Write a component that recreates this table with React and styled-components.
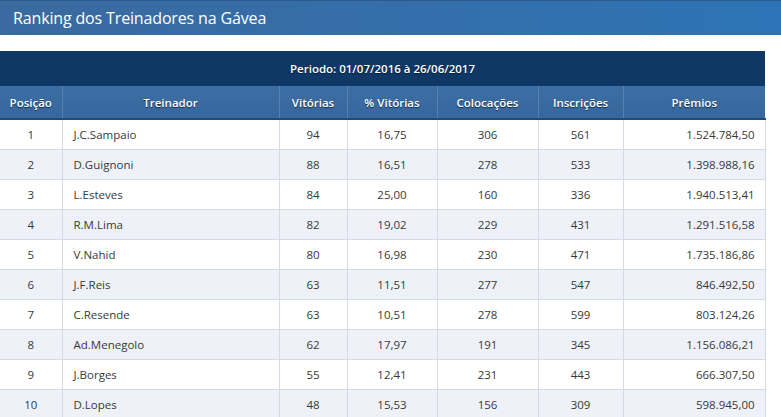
import React from "react";
import styled, { createGlobalStyle } from "styled-components";

const Global = createGlobalStyle`
  html, body { margin: 0; padding: 0; background: #fff; }
  body { font-family: "Open Sans", "Noto Sans", sans-serif; }
`;

const Page = styled.div`
  width: 781px;
  height: 417px;
  overflow: hidden;
  background: #fff;
`;

const TitleBar = styled.div`
  height: 34px;
  border-top: 1px solid #2d5b8e;
  background: linear-gradient(to right, #3a6a9f 0%, #336fac 60%, #2d74b6 100%);
  display: flex;
  align-items: center;
  padding-left: 13px;
  color: #fff;
  font-size: 16px;
  letter-spacing: -0.15px;
`;

const Gap = styled.div`
  height: 16px;
`;

const Table = styled.table`
  width: 765px;
  border-collapse: collapse;
  table-layout: fixed;
  font-size: 11.5px;
`;

const PeriodCell = styled.th`
  height: 35px;
  padding: 0;
  background: #0f3867;
  color: #fff;
  font-weight: 600;
  font-size: 11.5px;
  text-shadow: 0 1px 1px rgba(0,0,0,0.5);
`;

const HeadCell = styled.th`
  height: 32px;
  padding: 0;
  background: linear-gradient(to bottom, #3c6ea4, #37679c);
  color: #fff;
  font-weight: 600;
  font-size: 11.5px;
  text-shadow: 0 1px 1px rgba(0,0,0,0.6);
  border-left: 1px solid #5582b3;
  border-bottom: 2px solid #21497a;
  &:first-child { border-left: none; }
`;

const Row = styled.tr`
  background: ${(p) => (p.$alt ? "#eef2f8" : "#ffffff")};
`;

const Cell = styled.td`
  height: 29px;
  padding: ${(p) =>
    p.$align === "left" ? "0 0 0 11px" : p.$align === "right" ? "0 10px 0 0" : "0"};
  text-align: ${(p) => p.$align || "center"};
  color: #383838;
  border: 1px solid #d6dbe3;
  &:first-child { border-left: none; }
  white-space: nowrap;
`;

const cols = [
  { label: "Posição", w: 62 },
  { label: "Treinador", w: 217 },
  { label: "Vitórias", w: 68 },
  { label: "% Vitórias", w: 90 },
  { label: "Colocações", w: 101 },
  { label: "Inscrições", w: 85 },
  { label: "Prêmios", w: 142 },
];

const aligns = ["center", "left", "center", "center", "center", "center", "right"];

const data = [
  ["1", "J.C.Sampaio", "94", "16,75", "306", "561", "1.524.784,50"],
  ["2", "D.Guignoni", "88", "16,51", "278", "533", "1.398.988,16"],
  ["3", "L.Esteves", "84", "25,00", "160", "336", "1.940.513,41"],
  ["4", "R.M.Lima", "82", "19,02", "229", "431", "1.291.516,58"],
  ["5", "V.Nahid", "80", "16,98", "230", "471", "1.735.186,86"],
  ["6", "J.F.Reis", "63", "11,51", "277", "547", "846.492,50"],
  ["7", "C.Resende", "63", "10,51", "278", "599", "803.124,26"],
  ["8", "Ad.Menegolo", "62", "17,97", "191", "345", "1.156.086,21"],
  ["9", "J.Borges", "55", "12,41", "231", "443", "666.307,50"],
  ["10", "D.Lopes", "48", "15,53", "156", "309", "598.945,00"],
];

export default function App() {
  return (
    <Page>
      <Global />
      <TitleBar>Ranking dos Treinadores na Gávea</TitleBar>
      <Gap />
      <Table>
        <colgroup>
          {cols.map((c) => (
            <col key={c.label} style={{ width: c.w }} />
          ))}
        </colgroup>
        <thead>
          <tr>
            <PeriodCell colSpan={7}>Periodo: 01/07/2016 à 26/06/2017</PeriodCell>
          </tr>
          <tr>
            {cols.map((c) => (
              <HeadCell key={c.label}>{c.label}</HeadCell>
            ))}
          </tr>
        </thead>
        <tbody>
          {data.map((r, i) => (
            <Row key={r[0]} $alt={i % 2 === 1}>
              {r.map((v, j) => (
                <Cell key={j} $align={aligns[j]}>
                  {v}
                </Cell>
              ))}
            </Row>
          ))}
        </tbody>
      </Table>
    </Page>
  );
}
